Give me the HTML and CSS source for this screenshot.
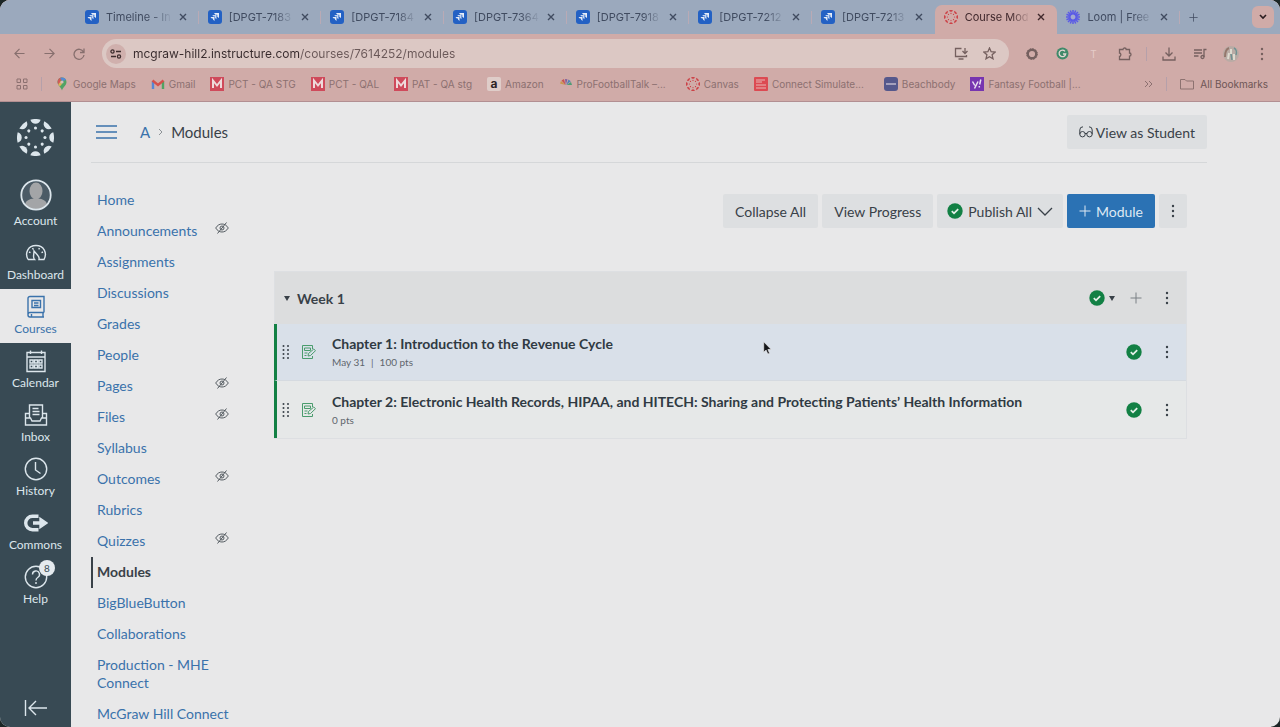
FILE: index.html
```html
<!DOCTYPE html>
<html lang="en">
<head>
    <meta charset="UTF-8">
    <meta name="viewport" content="width=device-width, initial-scale=1.0">
    <title>Course Modules</title>
    <link rel="stylesheet" href="styles.css">
</head>
<body>

<!-- Shared icons -->
<svg class="sprite" aria-hidden="true">
    <symbol id="jira" viewBox="0 0 14 14">
        <rect width="14" height="14" rx="3" fill="#2361c4"/>
        <path d="M6 3h5v5L9.300 6.700V4.700H7.300z" fill="#e6edf8"/>
        <path d="M4.200 5h4.300v4.300L7 8V6.500H5.500z" fill="#c3d5f2"/>
        <path d="M2.500 7h4v4L5 9.600V8.500H3.800z" fill="#e6edf8"/>
    </symbol>
    <symbol id="close" viewBox="0 0 8 8">
        <path d="M1 1l6 6M7 1L1 7" stroke="currentColor" stroke-width="1.400" fill="none"/>
    </symbol>
    <symbol id="canvas" viewBox="-18 -18 36 36">
        <g id="canvas-half" fill="currentColor">
            <g id="canvas-part">
                <path d="M-5 -17.300A18 18 0 0 1 5 -17.300A5.300 5.800 0 0 1 -5 -17.300z"/>
                <circle cy="-9.200" r="1.500"/>
            </g>
            <use href="#canvas-part" transform="rotate(45)"/>
            <use href="#canvas-part" transform="rotate(90)"/>
            <use href="#canvas-part" transform="rotate(135)"/>
        </g>
        <use href="#canvas-half" transform="rotate(180)"/>
    </symbol>
    <symbol id="mgh" viewBox="0 0 14 14">
        <rect width="14" height="14" fill="#cf4a5b"/>
        <path d="M3 11V3.500L7 8.500L11 3.500V11" stroke="#eedadb" stroke-width="2" fill="none"/>
    </symbol>
    <symbol id="eye-off" viewBox="0 0 14 12">
        <path d="M.7 6C2.500 3.200 4.500 2 7 2s4.500 1.200 6.300 4C11.500 8.800 9.500 10 7 10S2.500 8.800.7 6z" fill="none" stroke="currentColor"/>
        <circle cx="7" cy="6" r="2" fill="none" stroke="currentColor"/>
        <path d="M11.500.5l-9 11" stroke="currentColor" fill="none"/>
    </symbol>
    <symbol id="check" viewBox="0 0 16 16">
        <circle cx="8" cy="8" r="7.700" fill="#128044"/>
        <path d="M4.800 8.200l2.200 2.100 4.200-4.100" fill="none" stroke="#e4efe8" stroke-width="1.800"/>
    </symbol>
    <symbol id="more" viewBox="0 0 4 14">
        <g fill="currentColor"><circle cx="2" cy="2" r="1.200"/><circle cx="2" cy="7" r="1.200"/><circle cx="2" cy="12" r="1.200"/></g>
    </symbol>
    <symbol id="plus" viewBox="0 0 12 12">
        <path d="M6 .5v11M.5 6h11" stroke="currentColor" fill="none"/>
    </symbol>
    <symbol id="grip" viewBox="0 0 8 14">
        <g fill="currentColor">
            <circle cx="1.500" cy="1" r="1"/><circle cx="6" cy="1" r="1"/>
            <circle cx="1.500" cy="5" r="1"/><circle cx="6" cy="5" r="1"/>
            <circle cx="1.500" cy="9" r="1"/><circle cx="6" cy="9" r="1"/>
            <circle cx="1.500" cy="13" r="1"/><circle cx="6" cy="13" r="1"/>
        </g>
    </symbol>
    <symbol id="assignment" viewBox="0 0 14 14">
        <g fill="none" stroke="currentColor" stroke-width="1">
            <path d="M10.500 4V.5H.5v13h10V11"/>
            <path d="M2.500 3h6v2.500h-6zM2.500 8h3M2.500 10.500h2"/>
            <path d="M6 11l.5-2.500L11.800 4l1.700 1.700L8.500 10.500z"/>
        </g>
    </symbol>
</svg>

<!-- Browser bar -->
<header class="browser">
    <div class="tabs">
        <div class="tab"><svg class="fav"><use href="#jira"/></svg><span class="tab-title">Timeline - In</span><button class="close" aria-label="Close tab"><svg><use href="#close"/></svg></button></div>
        <div class="tab"><svg class="fav"><use href="#jira"/></svg><span class="tab-title">[DPGT-7183</span><button class="close" aria-label="Close tab"><svg><use href="#close"/></svg></button></div>
        <div class="tab"><svg class="fav"><use href="#jira"/></svg><span class="tab-title">[DPGT-7184</span><button class="close" aria-label="Close tab"><svg><use href="#close"/></svg></button></div>
        <div class="tab"><svg class="fav"><use href="#jira"/></svg><span class="tab-title">[DPGT-7364</span><button class="close" aria-label="Close tab"><svg><use href="#close"/></svg></button></div>
        <div class="tab"><svg class="fav"><use href="#jira"/></svg><span class="tab-title">[DPGT-7918</span><button class="close" aria-label="Close tab"><svg><use href="#close"/></svg></button></div>
        <div class="tab"><svg class="fav"><use href="#jira"/></svg><span class="tab-title">[DPGT-7212</span><button class="close" aria-label="Close tab"><svg><use href="#close"/></svg></button></div>
        <div class="tab no-line"><svg class="fav"><use href="#jira"/></svg><span class="tab-title">[DPGT-7213</span><button class="close" aria-label="Close tab"><svg><use href="#close"/></svg></button></div>
        <div class="tab active"><svg class="fav red"><use href="#canvas"/></svg><span class="tab-title">Course Mod</span><button class="close" aria-label="Close tab"><svg><use href="#close"/></svg></button></div>
        <div class="tab">
            <svg class="fav" viewBox="-7 -7 14 14"><g stroke="#5b5be6" stroke-width="1.500"><path d="M0-7V7M-7 0H7M-5-5L5 5M5-5L-5 5M-2.700-6.500L2.700 6.500M2.700-6.500L-2.700 6.500M-6.500-2.700L6.500 2.700M-6.500 2.700L6.500-2.700"/></g><circle r="3.300" fill="#a3a9d0" stroke="#5b5be6" stroke-width="1.800"/></svg>
            <span class="tab-title">Loom | Free</span><button class="close" aria-label="Close tab"><svg><use href="#close"/></svg></button>
        </div>
        <div class="tabs-end">
            <button class="new-tab" aria-label="New tab"><svg width="9" height="9"><use href="#plus"/></svg></button>
            <button class="tab-search" aria-label="Search tabs"><svg width="8" height="6" viewBox="0 0 8 6"><path d="M1 1l3 3 3-3" fill="none" stroke="currentColor" stroke-width="1.600"/></svg></button>
        </div>
    </div>

    <div class="toolbar">
        <button class="tool nav" aria-label="Back"><svg width="11" height="11" viewBox="0 0 12 12"><path d="M11.500 6H1M6 1L1 6l5 5"/></svg></button>
        <button class="tool nav" aria-label="Forward"><svg width="11" height="11" viewBox="0 0 12 12"><path d="M.5 6H11M6 1l5 5-5 5"/></svg></button>
        <button class="tool nav" aria-label="Reload"><svg width="12" height="12" viewBox="0 0 12 12"><path d="M10.500 4A5 5 0 1 0 11 7M11 .5v4H7"/></svg></button>
        <div class="address">
            <button class="site-info" aria-label="Site information"><svg width="12" height="10" viewBox="0 0 12 10"><circle cx="2.500" cy="2.500" r="1.600"/><path d="M6 2.500h5M1 7.500h5"/><circle cx="9" cy="7.500" r="1.600"/></svg></button>
            <input type="text" aria-label="Address" value="mcgraw-hill2.instructure.com/courses/7614252/modules">
            <button class="mini" aria-label="Install"><svg width="15" height="13" viewBox="0 0 15 13"><path d="M7.500 1.500H1.500v8h11V8M4.500 12h5M11 1v5M8.500 4L11 6.500 13.500 4"/></svg></button>
            <button class="mini" aria-label="Bookmark"><svg width="13" height="13" viewBox="0 0 13 13"><path d="M6.500 1l1.600 3.700 4 .4-3 2.700.9 4-3.500-2.100L3 11.800l.9-4-3-2.700 4-.4z"/></svg></button>
        </div>
        <button class="tool" aria-label="Recorder"><svg width="12" height="12" viewBox="0 0 12 12"><circle cx="6" cy="6" r="4.300" stroke-width="2.400"/><circle cx="6" cy="6" r="5.400" stroke-width="1" stroke-dasharray="1.400 1.400"/></svg></button>
        <button class="tool" aria-label="Grammar"><svg width="13" height="13" viewBox="0 0 13 13"><circle cx="6.500" cy="6.500" r="6" fill="#3f8a6a" stroke="none"/><path d="M9 4.300A3.300 3.300 0 1 0 9.700 7H7" stroke="#e3d8d4"/></svg></button>
        <button class="tool pale" aria-label="Text tool">T</button>
        <button class="tool" aria-label="Extensions"><svg width="14" height="14" viewBox="0 0 14 14"><path d="M1.500 2.500h3.500c0-2 3.200-2 3.200 0h3.300v3.500c2 0 2 3.200 0 3.200v3.300h-10V9.500c1.800 0 1.800-3.500 0-3.500z"/></svg></button>
        <span class="divider"></span>
        <button class="tool" aria-label="Downloads"><svg width="14" height="14" viewBox="0 0 14 14"><path d="M7 .5v8M3.500 5.500L7 9l3.500-3.500M1 9.500V13h12V9.500"/></svg></button>
        <button class="tool" aria-label="Media"><svg width="14" height="12" viewBox="0 0 14 12"><path d="M1 2h8M1 5h8M1 8h4.500M11 9V1.500h2.500"/><circle cx="9.500" cy="9" r="1.500"/></svg></button>
        <button class="tool" aria-label="Profile"><svg width="18" height="18" viewBox="0 0 18 18"><circle cx="9" cy="9" r="8" fill="#b9aba5" stroke="none"/><path d="M7 3c-3 1-4 5-4 9" stroke="#94776c" stroke-width="2"/><path d="M9 4v5M7 8l-1 6M12 9v6" stroke="#dedbd0" stroke-width="2"/><path d="M12 3c2 1 3 4 2 7M9 9l1 6" stroke="#6f9292" stroke-width="1.500"/></svg></button>
        <button class="tool" aria-label="Menu"><svg width="4" height="14"><use href="#more" stroke="none"/></svg></button>
    </div>

    <nav class="bookmarks" aria-label="Bookmarks">
        <svg class="apps" width="12" height="12" viewBox="0 0 12 12"><path d="M1 1h3.500v3.500H1zM7.500 1H11v3.500H7.500zM1 7.500h3.500V11H1zM7.500 7.500H11V11H7.500z" fill="none" stroke="currentColor"/></svg>
        <span class="divider"></span>
        <a href="#"><svg class="fav" viewBox="0 0 14 14"><path d="M7 13.500C6.500 10.500 2.500 8.500 2.500 5A4.500 4.500 0 0 1 11.500 5C11.500 8.500 7.500 10.500 7 13.500z" fill="#50a363"/><path d="M2.500 5A4.500 4.500 0 0 1 7 .5L5 6 3.500 8z" fill="#cf5a58"/><path d="M5 1a4.500 4.500 0 0 1 6 2L7.500 4z" fill="#5588d6"/><path d="M3.200 7.500L6 4l1 3-2.200 2.500z" fill="#dcb45a"/><circle cx="7" cy="5" r="1.600" fill="#d8bcb8"/></svg>Google Maps</a>
        <a href="#"><svg class="fav" viewBox="0 0 14 14"><path d="M2 12V4" stroke="#5588d6" stroke-width="2.400"/><path d="M12 12V4" stroke="#50a363" stroke-width="2.400"/><path d="M1.500 3.500L7 8l5.500-4.500" stroke="#d4514c" stroke-width="2.400" fill="none"/></svg>Gmail</a>
        <a href="#"><svg class="fav"><use href="#mgh"/></svg>PCT - QA STG</a>
        <a href="#"><svg class="fav"><use href="#mgh"/></svg>PCT - QAL</a>
        <a href="#"><svg class="fav"><use href="#mgh"/></svg>PAT - QA stg</a>
        <a href="#"><span class="amazon">a</span>Amazon</a>
        <a href="#" class="cut"><svg class="fav" viewBox="0 0 14 14"><path d="M6.500 8L1 6.500 2 4z" fill="#c9974e"/><path d="M6.500 8L2.500 3.500 5 2z" fill="#c75350"/><path d="M6.800 8L6 2l2.500.3z" fill="#80609e"/><path d="M7.300 8L9.500 2.500l2.300 1.800z" fill="#5580b8"/><path d="M7.500 8L12 5l1 3z" fill="#4e9c76"/></svg>ProFootballTalk –...</a>
        <a href="#"><svg class="fav red"><use href="#canvas"/></svg>Canvas</a>
        <a href="#" class="cut"><svg class="fav" viewBox="0 0 14 14"><rect width="14" height="14" rx="1" fill="#dc4a52"/><path d="M2 3h9M2 5h6M2 8h10M2 11h10" stroke="#e8b7b5"/></svg>Connect Simulate...</a>
        <a href="#"><svg class="fav" viewBox="0 0 14 14"><rect width="14" height="14" rx="3" fill="#55588c"/><path d="M2 7h10" stroke="#bfb9cc" stroke-width="1.500"/></svg>Beachbody</a>
        <a href="#"><svg class="fav" viewBox="0 0 14 14"><rect width="14" height="14" fill="#7735b0"/><path d="M2.500 4.500l2.300 4M8 4.500L4.500 11.500M10.800 2.500L9.700 7.500M9.300 9v1.500" stroke="#eadff0" stroke-width="1.500" fill="none"/></svg>Fantasy Football |...</a>
        <span class="overflow"><svg width="9" height="8" viewBox="0 0 9 8"><path d="M1 1l3 3-3 3M5 1l3 3-3 3" fill="none" stroke="currentColor"/></svg></span>
        <span class="divider"></span>
        <a href="#" class="all"><svg class="fav" viewBox="0 0 14 14"><path d="M.5 2.500h4.500l1.500 1.500h7v8H.5z" fill="none" stroke="#8d7270"/></svg>All Bookmarks</a>
    </nav>
</header>

<div class="app">
    <!-- Global navigation -->
    <nav class="global-nav" aria-label="Global">
        <a href="#" class="logo" aria-label="Canvas"><svg width="37" height="37"><use href="#canvas"/></svg></a>
        <a href="#" class="account">
            <svg width="32" height="32" viewBox="0 0 32 32"><circle cx="16" cy="16" r="14.500" fill="#4b5b66"/><path d="M5 25.500C6 20.500 11 19.500 16 19.500s10 1 11 6A14.500 14.500 0 0 1 5 25.500z" fill="#a3a5a7"/><ellipse cx="16" cy="12" rx="6.500" ry="8.500" fill="#a3a5a7"/><circle cx="16" cy="16" r="14.700" fill="none" stroke="#dce6ec" stroke-width="1.800"/></svg>
            Account</a>
        <a href="#"><svg viewBox="0 0 24 24"><path d="M4 18.500C.5 12 4 4.500 12 4.500S23.500 12 20 18.500H15c1-3-2-5-5-8.500 0 4-1.500 6.500.5 8.500H4M5 11l1.500.7M8.500 7l.8 1.400M15.500 7l-.8 1.400M19 11l-1.500.7"/></svg>Dashboard</a>
        <a href="#" class="active"><svg viewBox="0 0 24 24"><path d="M20 17.500V1.500H6a2 2 0 0 0-2 2v16.500a2 2 0 0 0 2 2h14M20 17.500H6a2 2 0 0 0-2 2M19 17.500v4.500M8 5.500h8.500v7H8zM10 8h4.500M10 10.500h4.500M7.500 19v3"/></svg>Courses</a>
        <a href="#"><svg viewBox="0 0 24 24"><path d="M3 3.500h18v19H3zM3 8h18M6.500 1.500v3.500M17.500 1.500v3.500M6 11h3v3H6zM10.500 11h3v3h-3zM15 11h3v3h-3zM6 16h3v3H6zM10.500 16h3v3h-3zM15 16h3v3h-3z"/></svg>Calendar</a>
        <a href="#"><svg viewBox="0 0 24 24"><path d="M5.500 15V2h13v13M8.500 5.500h6M8.500 8.500h7M8.500 11.500h7M5.500 10.500H1.500V22h21V10.500h-4M1.500 15h5l1.500 3h8l1.500-3h5"/></svg>Inbox</a>
        <a href="#"><svg viewBox="0 0 24 24"><circle cx="12" cy="12" r="10.700"/><path d="M11.500 5v8l5 3.500"/></svg>History</a>
        <a href="#"><svg viewBox="0 0 24 24"><path d="M14.500 5.200H8.500a6.800 6.800 0 0 0 0 13.600h6" stroke-width="3.400"/><path d="M9 12h9" stroke-width="3.400"/><path d="M16 7l7 5-7 5z" fill="currentColor"/></svg>Commons</a>
        <a href="#" class="help"><svg viewBox="0 0 24 24"><circle cx="12" cy="12" r="10.700"/><path d="M8.500 9.500a3.500 3.500 0 1 1 5.200 3c-1.300.7-1.700 1.300-1.700 3M12 17v2"/></svg><span class="badge">8</span>Help</a>
        <button class="collapse" aria-label="Minimize navigation"><svg width="24" height="18" viewBox="0 0 24 18"><path d="M1.500 1v16M23 9H5M12 2L5 9l7 7"/></svg></button>
    </nav>

    <main class="page">
        <div class="page-head">
            <button class="burger" aria-label="Toggle course menu"><svg width="21" height="14" viewBox="0 0 21 14"><path d="M0 1h21M0 7h21M0 13h21" stroke="currentColor" stroke-width="1.300"/></svg></button>
            <div class="crumbs"><a href="#">A</a><svg width="5" height="8" viewBox="0 0 5 8"><path d="M1 1l3 3-3 3" fill="none" stroke="#8d9296"/></svg><span>Modules</span></div>
            <button class="btn student"><svg width="14" height="12" viewBox="0 0 14 12"><g fill="none" stroke="currentColor"><circle cx="3.500" cy="8.200" r="2.700"/><circle cx="10.500" cy="8.200" r="2.700"/><path d="M.8 8.200V4Q.8.800 4 .8M13.200 8.200V4Q13.200.800 10 .8M6 7.500h2"/></g></svg>View as Student</button>
        </div>

        <div class="columns">
            <nav class="course-nav" aria-label="Course">
                <a href="#">Home</a>
                <a href="#">Announcements<svg><use href="#eye-off"/></svg></a>
                <a href="#">Assignments</a>
                <a href="#">Discussions</a>
                <a href="#">Grades</a>
                <a href="#">People</a>
                <a href="#">Pages<svg><use href="#eye-off"/></svg></a>
                <a href="#">Files<svg><use href="#eye-off"/></svg></a>
                <a href="#">Syllabus</a>
                <a href="#">Outcomes<svg><use href="#eye-off"/></svg></a>
                <a href="#">Rubrics</a>
                <a href="#">Quizzes<svg><use href="#eye-off"/></svg></a>
                <a href="#" class="current">Modules</a>
                <a href="#">BigBlueButton</a>
                <a href="#">Collaborations</a>
                <a href="#">Production - MHE Connect</a>
                <a href="#">McGraw Hill Connect</a>
            </nav>

            <section class="content">
                <div class="actions">
                    <button class="btn">Collapse All</button>
                    <button class="btn">View Progress</button>
                    <button class="btn publish"><svg width="16" height="16"><use href="#check"/></svg>Publish All<svg width="16" height="9" viewBox="0 0 16 9"><path d="M1 1l7 7 7-7" fill="none" stroke="currentColor" stroke-width="1.300"/></svg></button>
                    <button class="btn primary"><svg width="12" height="12"><use href="#plus"/></svg>Module</button>
                    <button class="btn dots" aria-label="More options"><svg width="4" height="14"><use href="#more"/></svg></button>
                </div>

                <div class="module">
                    <div class="module-head">
                        <button class="toggle" aria-label="Collapse Week 1"><svg width="6" height="5" viewBox="0 0 6 5"><path d="M0 0h6L3 5z" fill="currentColor"/></svg></button>
                        <h2>Week 1</h2>
                        <button class="status" aria-label="Published"><svg width="16" height="16"><use href="#check"/></svg><svg width="6" height="5" viewBox="0 0 6 5"><path d="M0 0h6L3 5z" fill="currentColor"/></svg></button>
                        <button class="add" aria-label="Add item"><svg width="12" height="12"><use href="#plus"/></svg></button>
                        <button class="kebab" aria-label="Week 1 options"><svg width="4" height="14"><use href="#more"/></svg></button>
                    </div>
                    <div class="item hover">
                        <svg class="grip" width="8" height="14"><use href="#grip"/></svg>
                        <svg class="type" width="14" height="14"><use href="#assignment"/></svg>
                        <div class="item-text">
                            <a href="#">Chapter 1: Introduction to the Revenue Cycle</a>
                            <p><span>May 31</span><span>|</span><span>100 pts</span></p>
                        </div>
                        <button class="status" aria-label="Published"><svg width="16" height="16"><use href="#check"/></svg></button>
                        <button class="kebab" aria-label="Chapter 1 options"><svg width="4" height="14"><use href="#more"/></svg></button>
                    </div>
                    <div class="item">
                        <svg class="grip" width="8" height="14"><use href="#grip"/></svg>
                        <svg class="type" width="14" height="14"><use href="#assignment"/></svg>
                        <div class="item-text">
                            <a href="#">Chapter 2: Electronic Health Records, HIPAA, and HITECH: Sharing and Protecting Patients’ Health Information</a>
                            <p><span>0 pts</span></p>
                        </div>
                        <button class="status" aria-label="Published"><svg width="16" height="16"><use href="#check"/></svg></button>
                        <button class="kebab" aria-label="Chapter 2 options"><svg width="4" height="14"><use href="#more"/></svg></button>
                    </div>
                </div>
            </section>
        </div>
    </main>
</div>

<svg class="cursor" width="9" height="14" viewBox="0 0 9 14"><path d="M.7.8v10.500l2.400-2.200 1.700 4 1.800-.8-1.700-3.800h3.300z" fill="#15171a" stroke="#e8e8e9" stroke-width=".7"/></svg>

</body>
</html>
```
FILE: styles.css
```css
* {
    box-sizing: border-box;
}
html {
    background: #1c2626;
}
body {
    margin: 0;
    height: 100vh;
    display: flex;
    flex-direction: column;
    overflow: hidden;
    border-radius: 10px;
    font-family: Lato, sans-serif;
    font-size: 14px;
    color: #394148;
    background: #e8e8e9;
}
button {
    display: flex;
    align-items: center;
    justify-content: center;
    padding: 0;
    border: none;
    background: none;
    font: inherit;
    color: inherit;
    cursor: pointer;
}
a {
    color: #3a72ab;
    text-decoration: none;
}
svg {
    flex: none;
}
.sprite {
    position: absolute;
    width: 0;
    height: 0;
}

/* Browser bar */
.browser {
    flex: none;
    font-family: Inter, sans-serif;
    font-size: 10px;
    background: #d0aba8;
    border-bottom: 1px solid #b28f92;
}
.tabs {
    display: flex;
    height: 34px;
    padding-left: 76px;
    background: #9ba9bd;
    color: #404b60;
    font-size: 11px;
}
.tab {
    flex: 1;
    min-width: 0;
    display: flex;
    align-items: center;
    gap: 7px;
    padding: 0 12px 0 9px;
    position: relative;
}
.tab::after {
    content: "";
    position: absolute;
    right: 0;
    top: 11px;
    width: 1px;
    height: 13px;
    background: #b9aab5;
}
.tab.no-line::after,
.tab.active::after {
    display: none;
}
.tab.active {
    margin-top: 5px;
    padding-bottom: 5px;
    border-radius: 7px 7px 0 0;
    background: #d0aba8;
    color: #40282c;
}
.fav {
    width: 14px;
    height: 14px;
}
.red {
    color: #cc4146;
}
.tab-title {
    flex: 1;
    overflow: hidden;
    white-space: nowrap;
    mask-image: linear-gradient(90deg, #000 70%, transparent);
}
.close svg {
    width: 8px;
    height: 8px;
}
.tabs-end {
    flex: none;
    width: 100px;
    display: flex;
    align-items: center;
    justify-content: space-between;
    padding: 0 6px 0 9px;
}
.tab-search {
    width: 22px;
    height: 22px;
    border-radius: 6px;
    background: #d0aba8;
    color: #2b1d20;
}
.toolbar {
    display: flex;
    align-items: center;
    height: 39px;
    padding: 0 3px 0 4px;
    color: #75605f;
}
.tool {
    width: 31px;
    height: 30px;
}
.tool.nav {
    width: 30px;
    color: #876f6e;
}
.toolbar svg {
    fill: none;
    stroke: currentColor;
    stroke-width: 1.3;
}
.pale {
    color: #e5cbc8;
}
.divider {
    width: 1px;
    height: 14px;
    margin: 0 6px;
    background: #b5a0aa;
}
.address {
    flex: 1;
    display: flex;
    align-items: center;
    height: 29px;
    margin: 0 7px 0 8px;
    padding: 0 6px 0 4px;
    border-radius: 15px;
    background: #dcc8c4;
}
.site-info {
    width: 20px;
    height: 20px;
    border-radius: 50%;
    background: #d0b0ad;
    color: #3d2c2d;
}
.address input {
    flex: 1;
    min-width: 0;
    margin-left: 7px;
    padding: 0;
    border: none;
    outline: none;
    font: 12px Inter, sans-serif;
    color: transparent;
    background: linear-gradient(90deg, #382b2d 167px, #6a5858 167px);
    background-clip: text;
    -webkit-background-clip: text;
}
.mini {
    width: 28px;
    height: 24px;
}
.bookmarks {
    display: flex;
    align-items: center;
    gap: 15px;
    height: 28px;
    padding: 0 12px 6px 16px;
    white-space: nowrap;
}
.bookmarks a {
    display: flex;
    align-items: center;
    gap: 4px;
    color: #8c7070;
}
.bookmarks .cut {
    margin-right: 5px;
}
.bookmarks .divider {
    margin: 0 -2px;
}
.bookmarks .all {
    gap: 6px;
    color: #6d5555;
}
.apps,
.overflow {
    color: #8c7070;
}
.overflow {
    margin-left: auto;
}
.amazon {
    width: 14px;
    height: 14px;
    border-radius: 2px;
    background: #dfcdc9;
    color: #2e2525;
    font-size: 12px;
    font-weight: bold;
    line-height: 13px;
    text-align: center;
}

/* Global navigation */
.app {
    flex: 1;
    min-height: 0;
    display: flex;
}
.global-nav {
    flex: none;
    width: 71px;
    display: flex;
    flex-direction: column;
    background: #384a54;
    font-size: 12px;
}
.global-nav a {
    height: 54px;
    display: flex;
    flex-direction: column;
    align-items: center;
    justify-content: space-between;
    padding: 6px 0;
    line-height: 16px;
    color: #dce6ec;
    position: relative;
}
.global-nav a:not(.logo):not(.account) svg {
    width: 24px;
    height: 24px;
}
.global-nav a:not(.logo):not(.account) svg,
.collapse svg {
    fill: none;
    stroke: currentColor;
    stroke-width: 1.4;
}
.global-nav .logo {
    height: 71px;
    justify-content: center;
}
.global-nav .account {
    height: 62px;
}
.global-nav .active {
    background: #e8e8e9;
    color: #3a72ab;
}
.badge {
    position: absolute;
    left: 39px;
    top: 1px;
    width: 16px;
    height: 16px;
    border-radius: 50%;
    background: #e4eaee;
    color: #384a54;
    font-size: 10px;
    text-align: center;
}
.collapse {
    height: 38px;
    margin-top: auto;
    color: #dce6ec;
}

/* Page */
.page {
    flex: 1;
    min-width: 0;
    padding-left: 20px;
}
.page-head {
    display: flex;
    align-items: center;
    height: 61px;
    margin-right: 73px;
    padding-left: 5px;
    border-bottom: 1px solid #d5d7d9;
}
.burger {
    color: #3a72ab;
}
.crumbs {
    flex: 1;
    display: flex;
    align-items: center;
    gap: 8px;
    margin-left: 23px;
    font-size: 15px;
}
.btn {
    height: 34px;
    padding: 0 12px;
    border-radius: 2px;
    background: #dddfe1;
    white-space: nowrap;
}
.student {
    gap: 3px;
}
.columns {
    display: flex;
}
.course-nav {
    flex: none;
    width: 143px;
    padding-top: 22px;
}
.course-nav a {
    display: flex;
    justify-content: space-between;
    padding: 6px 5px 7px 6px;
    line-height: 18px;
}
.course-nav svg {
    width: 14px;
    height: 12px;
    color: #555c62;
}
.course-nav .current {
    padding-left: 4px;
    border-left: 2px solid #394148;
    font-weight: bold;
    color: #394148;
}
.content {
    flex: 1;
    min-width: 0;
    margin: 31px 93px 0 40px;
}
.actions {
    display: flex;
    justify-content: flex-end;
    gap: 4px;
}
.publish {
    gap: 5px;
    padding: 0 10px;
}
.primary {
    gap: 5px;
    background: #2b72b4;
    color: #dfe9f3;
}
.module {
    margin-top: 43px;
    border: 1px solid #dddfe2;
}
.module-head {
    display: flex;
    align-items: center;
    height: 52px;
    padding: 0 12px 0 9px;
    background: #dcddde;
}
.module-head h2 {
    flex: 1;
    margin: 0 0 0 7px;
    font-size: 14px;
}
.status {
    gap: 4px;
}
.add {
    margin-left: 15px;
    color: #7b8085;
}
.kebab {
    width: 14px;
    margin-left: 18px;
}
.item {
    display: flex;
    align-items: center;
    height: 57px;
    margin-left: -1px;
    padding: 0 12px 0 5px;
    border-left: 3px solid #128044;
    border-bottom: 1px solid #d5dae0;
    background: #e6e8e8;
}
.item:last-child {
    border-bottom: none;
}
.item.hover {
    background: #d9e0e9;
}
.type {
    margin-left: 12px;
    color: #4a9c6d;
}
.item-text {
    flex: 1;
    min-width: 0;
    margin-left: 16px;
}
.item-text a {
    font-weight: bold;
    line-height: 20px;
    color: #303a43;
}
.item-text p {
    display: flex;
    gap: 6px;
    margin: 0;
    font-size: 10px;
    line-height: 16px;
    color: #5f666d;
}
.cursor {
    position: absolute;
    left: 763px;
    top: 341px;
}
```
